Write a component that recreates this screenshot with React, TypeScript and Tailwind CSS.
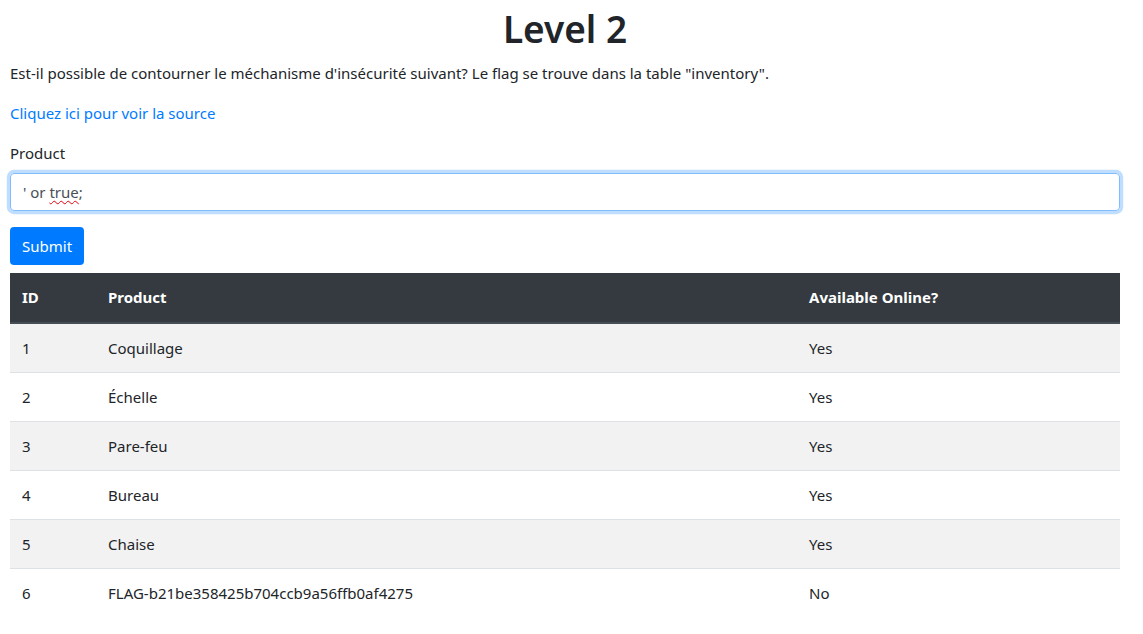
import React from 'react';

const rows = [
  { id: 1, product: 'Coquillage', online: 'Yes' },
  { id: 2, product: 'Échelle', online: 'Yes' },
  { id: 3, product: 'Pare-feu', online: 'Yes' },
  { id: 4, product: 'Bureau', online: 'Yes' },
  { id: 5, product: 'Chaise', online: 'Yes' },
  { id: 6, product: 'FLAG-b21be358425b704ccb9a56ffb0af4275', online: 'No' },
];

const App: React.FC = () => {
  return (
    <div className="min-h-screen bg-white pl-[10px] pr-[23px] text-[15px] leading-6 text-[#212529] font-['Noto_Sans',sans-serif]">
      <h1 className="pt-[5px] mb-2 text-center text-[37px] leading-[48px] font-semibold">Level 2</h1>
      <p className="mb-4">
        Est-il possible de contourner le méchanisme d'insécurité suivant? Le flag se trouve dans la table "inventory".
      </p>
      <p className="mb-4">
        <a href="#" className="text-[#007bff]">Cliquez ici pour voir la source</a>
      </p>

      {/* Form */}
      <form onSubmit={(e) => e.preventDefault()}>
        <div className="mb-4">
          <label className="block mb-2">Product</label>
          <div className="h-[38px] px-3 flex items-center rounded border border-[#80bdff] text-[#495057] shadow-[0_0_0_3.2px_rgba(0,123,255,0.25)]">
            <span>
              ' or <span className="underline decoration-wavy decoration-red-600 decoration-1 underline-offset-2">true</span>;
            </span>
          </div>
        </div>
        <button
          type="submit"
          className="h-[38px] px-3 rounded bg-[#007bff] text-white"
        >
          Submit
        </button>
      </form>

      {/* Results */}
      <table className="w-full mt-2 border-separate border-spacing-0 text-left">
        <thead>
          <tr className="bg-[#343a40] text-white">
            <th className="w-[86px] px-3 pt-3 pb-[13px] font-bold border-b-2 border-[#454d55]">ID</th>
            <th className="w-[701px] px-3 pt-3 pb-[13px] font-bold border-b-2 border-[#454d55]">Product</th>
            <th className="px-3 pt-3 pb-[13px] font-bold border-b-2 border-[#454d55]">Available Online?</th>
          </tr>
        </thead>
        <tbody>
          {rows.map((row, i) => (
            <tr key={row.id} className={i % 2 === 0 ? 'bg-[#f2f2f2]' : 'bg-white'}>
              <td className={`p-3 ${i > 0 ? 'border-t border-[#dee2e6]' : ''}`}>{row.id}</td>
              <td className={`p-3 ${i > 0 ? 'border-t border-[#dee2e6]' : ''}`}>{row.product}</td>
              <td className={`p-3 ${i > 0 ? 'border-t border-[#dee2e6]' : ''}`}>{row.online}</td>
            </tr>
          ))}
        </tbody>
      </table>
    </div>
  );
};

export default App;
